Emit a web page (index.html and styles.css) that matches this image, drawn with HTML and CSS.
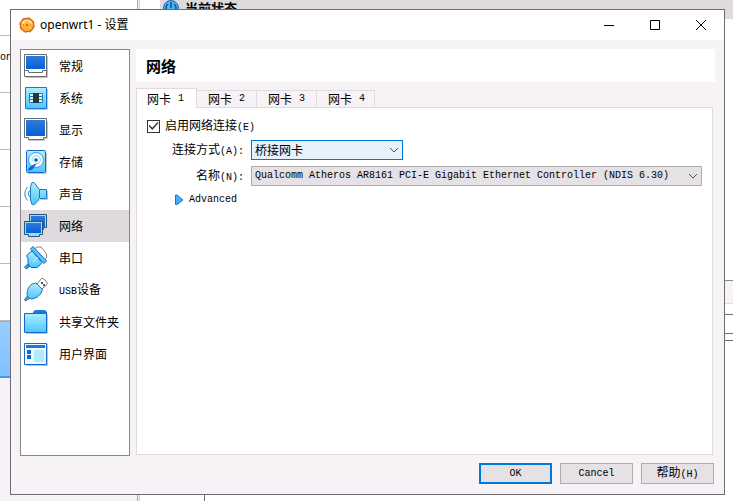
FILE: index.html
```html
<!DOCTYPE html>
<html lang="zh-CN">
<head>
    <meta charset="UTF-8">
    <meta name="viewport" content="width=device-width, initial-scale=1.0">
    <title>openwrt1 - 设置</title>
    <link rel="stylesheet" href="styles.css">
</head>
<body>
    <!-- 后面的主窗口 -->
    <div class="manager">
        <div class="vm-list">
            <div class="vm-row first"></div>
            <div class="vm-row"><span class="en">on</span></div>
            <div class="vm-row"></div>
            <div class="vm-row"></div>
            <div class="vm-row"></div>
            <div class="vm-row"></div>
            <div class="vm-row selected"></div>
        </div>
        <div class="vm-detail">
            <div class="state-bar">
                <svg width="16" height="16" viewBox="0 0 16 16">
                    <circle cx="8" cy="8" r="7.5" fill="#4fb4ec" stroke="#1667b5"/>
                    <path d="M8 2v6M5 4a5 5 0 1 0 6 0" fill="none" stroke="#0f4f9c" stroke-width="1.5"/>
                </svg>
                <strong>当前状态</strong>
            </div>
            <div class="detail-space"></div>
            <div class="detail-head"></div>
            <div class="detail-line short"></div>
            <div class="detail-line"></div>
            <div class="detail-line thin"></div>
            <div class="detail-rest"></div>
        </div>
    </div>

    <!-- 设置对话框 -->
    <div class="dialog" role="dialog" aria-labelledby="dialog-title">
        <header class="titlebar">
            <svg class="app-icon" width="16" height="16" viewBox="0 0 16 16">
                <circle cx="8" cy="8" r="6.700" fill="#ffb737" stroke="#df5b1b" stroke-width="1.200"/>
                <circle cx="8" cy="8" r="7.200" fill="none" stroke="#e8742a" stroke-width="1.200" stroke-dasharray="3.600 2.050"/>
                <path d="M3.500 6.500C5 3 11 3 12.500 6.500" fill="none" stroke="#ffe29a" stroke-width="2"/>
                <circle cx="8" cy="8" r="1.200" fill="#d9661a"/>
                <path d="M8 4v1M8 11v1M4 8h1M11 8h1" stroke="#e0741e"/>
            </svg>
            <h1 id="dialog-title">openwrt1 - 设置</h1>
            <div class="window-buttons">
                <button type="button" aria-label="最小化">
                    <svg width="10" height="10"><path d="M0 5.500h10" stroke="#000"/></svg>
                </button>
                <button type="button" aria-label="最大化">
                    <svg width="10" height="10"><path d="M.5.5h9v9h-9z" fill="none" stroke="#000"/></svg>
                </button>
                <button type="button" aria-label="关闭">
                    <svg width="10" height="10"><path d="M0 0 10 10M10 0 0 10" stroke="#000"/></svg>
                </button>
            </div>
        </header>

        <div class="content">
            <nav class="sidebar">
                <a href="#general">
                    <svg width="24" height="24" viewBox="0 0 24 24">
                        <path d="M2 23.500h21.500V2" fill="none" stroke="#c4c4c4"/>
                        <path d="M.5.5h22v22H.5z" fill="#fff" stroke="#6b6b6b"/>
                        <path d="M2 2h19v13H2z" fill="url(#screen)"/>
                        <path d="M1 16.500h3.500v2h14v-2H22" fill="none" stroke="#6b6b6b"/>
                    </svg>
                    常规
                </a>
                <a href="#system">
                    <svg width="24" height="24" viewBox="0 0 24 24">
                        <path d="M3 23.500h20.500V3" fill="none" stroke="#c4c4c4"/>
                        <path d="M1.500 1.500h21v21h-21z" fill="url(#sky)" stroke="#1b74d6"/>
                        <path d="M5.500 7.500h13v9h-13z" fill="#d8f7ff" stroke="#2878b4"/>
                        <path d="M5 10.500h14M5 13.500h14" stroke="#2878b4"/>
                        <path d="M9 7h6v10H9z" fill="#28343c"/>
                    </svg>
                    系统
                </a>
                <a href="#display">
                    <svg width="24" height="24" viewBox="0 0 24 24">
                        <path d="M5 22.500h15.500v-2h3V3" fill="none" stroke="#c4c4c4"/>
                        <path d="M.5.5h22v19h-3v2h-15v-2h-4z" fill="#fff" stroke="#6b6b6b"/>
                        <path d="M2 2h19v16H2z" fill="url(#screen)"/>
                    </svg>
                    显示
                </a>
                <a href="#storage">
                    <svg width="24" height="24" viewBox="0 0 24 24">
                        <path d="M4 23.500h18.500V3" fill="none" stroke="#c4c4c4"/>
                        <rect x="2.500" y=".5" width="19" height="22" rx="1" fill="url(#sky)" stroke="#1468ce"/>
                        <circle cx="12" cy="10" r="7.500" fill="#f2fbff" stroke="#3f9ed8"/>
                        <circle cx="12" cy="10" r="1.800" fill="#0c58b8"/>
                        <path d="M8.500 11a4 4 0 1 1 5 2.700" fill="none" stroke="#8fcdf0"/>
                        <path d="m13 13-4 6-4 2-1-2 3-3z" fill="#1166cf"/>
                    </svg>
                    存储
                </a>
                <a href="#audio">
                    <svg width="24" height="24" viewBox="0 0 24 24">
                        <path d="M3.500 5Q-2 12 3.500 18.500M5.500 8.500Q3 12 5.500 15" fill="none" stroke="#2d88c8"/>
                        <path d="M10 23.500 16.500 17.500h7V9" fill="none" stroke="#c4c4c4"/>
                        <path d="M8 .5h2l5.500 7h7v9h-7l-5.500 6H8L6.500 18V5z" fill="url(#sky)" stroke="#2479bd"/>
                        <path d="M15.500 8v8" stroke="#2479bd"/>
                    </svg>
                    声音
                </a>
                <a href="#network" class="current">
                    <svg width="24" height="24" viewBox="0 0 24 24">
                        <path d="M5.500.5h17v13h-3v2h-11v-2h-3z" fill="#9edafa" stroke="#245675"/>
                        <path d="M7 2h14v11H7z" fill="url(#screen)"/>
                        <path d="M.5 7.500h18v13h-3v2h-11v-2h-4z" fill="#9edafa" stroke="#245675"/>
                        <path d="M2 9h15v10H2z" fill="url(#screen)"/>
                    </svg>
                    网络
                </a>
                <a href="#serial">
                    <svg width="24" height="24" viewBox="0 0 24 24">
                        <path d="m10.500 3 2.500-2h4l5.500 7v4L20 14z" fill="#fff" stroke="#858585"/>
                        <path d="m4 18-3.500 3 2 2L6 20z" fill="#3aa6ed" stroke="#1266c5"/>
                        <path d="M8 5 3.500 8.500l-1 1.500L4 12v6l3 3.500h6l2-1.500 3-3.500z" fill="url(#sky)" stroke="#1266c5"/>
                        <path d="m6.500 3 2.500-2.500L22.500 15l-2.500 2.500z" fill="#58c4fb" stroke="#1266c5"/>
                        <path d="m9 16 5-5" stroke="#c9f3ff"/>
                    </svg>
                    串口
                </a>
                <a href="#usb">
                    <svg width="24" height="24" viewBox="0 0 24 24">
                        <path d="m13 6 4.500-5.500h2L23 4.500v2L18 11z" fill="#fff" stroke="#777"/>
                        <path d="M17 4h2v2h-2zM19 6h2v2h-2z" fill="#555"/>
                        <path d="m3.500 18-3 3.500 1 1.500L6 20z" fill="#3aa6ed" stroke="#386987"/>
                        <path d="m12 5 6.500 6.500-1.500 4q-4 5-9 5.500l-3.500-1-1.500-3Q3 9 8 6z" fill="url(#sky)" stroke="#2676ae"/>
                    </svg>
                    <span><span class="en">USB</span>设备</span>
                </a>
                <a href="#shared">
                    <svg width="24" height="24" viewBox="0 0 24 24">
                        <path d="M2 23.500h21.500V4" fill="none" stroke="#c4c4c4"/>
                        <path d="M9 4v-2l2-2h10l2 2v2z" fill="#2476d5"/>
                        <path d="M.5 3.500h22v19H.5z" fill="url(#sky)" stroke="#1468ce"/>
                    </svg>
                    共享文件夹
                </a>
                <a href="#interface">
                    <svg width="24" height="24" viewBox="0 0 24 24">
                        <path d="M2 23.500h21.500V2" fill="none" stroke="#c4c4c4"/>
                        <path d="M.5 1.500h22v21H.5z" fill="#eafaff" stroke="#1468ce"/>
                        <path d="M2 3h19v3H2z" fill="#2476d5"/>
                        <path d="M3 8h4v4H3zM3 13h4v4H3z" fill="#1166cf"/>
                        <path d="M10 8h10v12H10z" fill="#b0eafc"/>
                    </svg>
                    用户界面
                </a>
            </nav>

            <main class="page">
                <h2>网络</h2>
                <div class="tabs" role="tablist">
                    <button type="button" role="tab" aria-selected="true" class="active">网卡<span class="en">1</span></button>
                    <button type="button" role="tab" aria-selected="false">网卡<span class="en">2</span></button>
                    <button type="button" role="tab" aria-selected="false">网卡<span class="en">3</span></button>
                    <button type="button" role="tab" aria-selected="false">网卡<span class="en">4</span></button>
                </div>
                <form class="panel" id="adapter-form">
                    <div class="check-row">
                        <input type="checkbox" id="enabled" checked>
                        <label for="enabled">启用网络连接<span class="en">(E)</span></label>
                    </div>
                    <div class="fields">
                        <label for="attached">连接方式<span class="en">(A):</span></label>
                        <div class="select attached">
                            <select id="attached"><option>桥接网卡</option></select>
                            <svg width="10" height="6"><path d="m1 1 4 4 4-4" fill="none" stroke="#555"/></svg>
                        </div>
                        <label for="name">名称<span class="en">(N):</span></label>
                        <div class="select name">
                            <select id="name"><option>Qualcomm Atheros AR8161 PCI-E Gigabit Ethernet Controller (NDIS 6.30)</option></select>
                            <svg width="10" height="6"><path d="m1 1 4 4 4-4" fill="none" stroke="#555"/></svg>
                        </div>
                    </div>
                    <button type="button" class="advanced en" aria-expanded="false">
                        <svg width="9" height="12" viewBox="0 0 9 12"><path d="M.5 1v9.500h1.500L8 6 2 1z" fill="#43b0f5" stroke="#1874ce"/></svg>
                        Advanced
                    </button>
                </form>
            </main>
        </div>

        <footer class="actions">
            <button type="submit" form="adapter-form" class="default en">OK</button>
            <button type="button" class="en">Cancel</button>
            <button type="button">帮助<span class="en">(H)</span></button>
        </footer>
    </div>

    <!-- 图标共用的渐变 -->
    <svg class="defs" width="0" height="0" aria-hidden="true">
        <linearGradient id="screen" x2="0" y2="1">
            <stop stop-color="#2f79dc"/>
            <stop offset="1" stop-color="#0562d4"/>
        </linearGradient>
        <linearGradient id="sky" x2="0" y2="1">
            <stop stop-color="#aeeeff"/>
            <stop offset="1" stop-color="#4cc5fb"/>
        </linearGradient>
    </svg>
</body>
</html>
```
FILE: styles.css
```css
* {
    box-sizing: border-box;
}

body {
    margin: 0;
    height: 100vh;
    overflow: hidden;
    background: #f6f2f6;
    color: #000;
    font: 12px/16px "Noto Sans CJK SC", sans-serif;
}

button,
select {
    margin: 0;
    padding: 0;
    border: none;
    border-radius: 0;
    background: none;
    color: inherit;
    font: inherit;
}

svg {
    display: block;
    flex: none;
}

/* 等宽西文 */
.en {
    font-family: "Liberation Mono", monospace;
    font-size: 10px;
}

.defs {
    position: absolute;
}

/* 主窗口 */
.manager {
    display: flex;
    height: 100%;
}

.vm-list {
    width: 138px;
    border-right: 1px solid #a9a6a9;
}

.vm-row {
    height: 57px;
    border-bottom: 1px solid #bdbabd;
    background: #fff;
    padding-top: 11px;
}

.vm-row.first {
    height: 36px;
}

.vm-row.selected {
    background: linear-gradient(#99cdff, #80c3ff);
    border-top: 1px solid #aaa;
    border-bottom: 2px solid #3d9df5;
}

.vm-detail {
    flex: 1;
    display: flex;
    flex-direction: column;
    margin-left: 1px;
    border-left: 1px solid #cfcbcf;
    background: #fff;
}

.state-bar {
    display: flex;
    gap: 6px;
    height: 19px;
    margin-left: 20px;
    padding-left: 3px;
    background: #dedade;
    font-size: 13px;
}

.detail-space {
    height: 261px;
}

.detail-head {
    height: 24px;
    border-top: 1px solid #828790;
    border-bottom: 1px solid #dedade;
    background: #f6f2f6;
}

.detail-line {
    height: 19px;
    border-bottom: 1px solid #6f6b70;
}

.detail-line.short {
    height: 11px;
}

.detail-line.thin {
    height: 7px;
}

.detail-rest {
    flex: 1;
    width: 65px;
    border-right: 1px solid #6f6b70;
}

/* 对话框 */
.dialog {
    position: absolute;
    inset: 9px 8px 6px 10px;
    display: flex;
    flex-direction: column;
    border: 1px solid #6f6b70;
    background: #f6f2f6;
}

.titlebar {
    display: flex;
    align-items: center;
    height: 30px;
    padding-left: 8px;
    background: #fff;
}

.titlebar h1 {
    flex: 1;
    margin: 0 0 0 5px;
    font: 12px/16px "Noto Sans", "Noto Sans CJK SC", sans-serif;
}

.window-buttons {
    display: flex;
    height: 100%;
}

.window-buttons button {
    display: flex;
    align-items: center;
    justify-content: center;
    width: 46px;
}

.content {
    flex: 1;
    display: flex;
    gap: 6px;
    min-height: 0;
    padding: 9px 9px 0;
}

.sidebar {
    width: 110px;
    border: 1px solid #828790;
    background: #fff;
}

.sidebar a {
    display: flex;
    align-items: center;
    gap: 11px;
    height: 32px;
    padding-left: 3px;
    color: inherit;
    text-decoration: none;
}

.sidebar a.current {
    background: #dedade;
}

.page {
    flex: 1;
    display: flex;
    flex-direction: column;
    min-width: 0;
}

.page h2 {
    margin: 0 0 6px;
    padding: 0 10px;
    background: #fff;
    font-size: 15px;
    line-height: 33px;
}

/* 标签页 */
.tabs {
    display: flex;
    align-items: flex-end;
    height: 19px;
}

.tabs button {
    display: flex;
    align-items: center;
    gap: 7px;
    width: 60px;
    height: 17px;
    padding-left: 11px;
    border: 1px solid #dedade;
    border-width: 1px 1px 0 0;
    line-height: 16px;
}

.tabs .active {
    z-index: 1;
    width: 61px;
    height: 20px;
    margin-bottom: -1px;
    padding-left: 10px;
    border-left-width: 1px;
    background: #fff;
}

.tabs button:last-child {
    width: 58px;
}

.panel {
    flex: 1;
    margin: 0 2px 1px 0;
    padding: 10px;
    border: 1px solid #dedade;
    background: #fff;
}

.check-row {
    display: flex;
    align-items: center;
    gap: 5px;
    height: 16px;
}

.check-row input {
    appearance: none;
    display: flex;
    align-items: center;
    justify-content: center;
    width: 13px;
    height: 13px;
    margin: 0;
    border: 1px solid #333;
    background: #fff;
}

.check-row input:checked::before {
    content: "";
    width: 10px;
    height: 8px;
    background: #333;
    clip-path: polygon(0 50%, 10% 38%, 38% 72%, 90% 0, 100% 12%, 38% 100%);
}

.fields {
    display: grid;
    grid-template-columns: 97px minmax(0, 1fr);
    align-items: center;
    gap: 6px 7px;
    margin-top: 6px;
}

.fields label {
    text-align: right;
}

.select {
    display: flex;
    align-items: center;
    height: 20px;
    padding-right: 3px;
    border: 1px solid #adadad;
    background: #e5e1e5;
}

.select select {
    appearance: none;
    flex: 1;
    min-width: 0;
    height: 18px;
    padding-left: 3px;
    outline: none;
}

.select.attached {
    width: 152px;
    border-color: #0078d7;
    background: #e5f1fb;
}

.select.name select {
    font-family: "Liberation Mono", monospace;
    font-size: 10px;
}

.advanced {
    display: flex;
    align-items: center;
    gap: 5px;
    margin: 6px 0 0 28px;
}

/* 底部按钮 */
.actions {
    display: flex;
    justify-content: flex-end;
    gap: 8px;
    padding: 7px 10px 10px;
}

.actions button {
    width: 73px;
    height: 21px;
    border: 1px solid #adadad;
    background: #e5e1e5;
}

.actions .default {
    border: 2px solid #0078d7;
}
```
